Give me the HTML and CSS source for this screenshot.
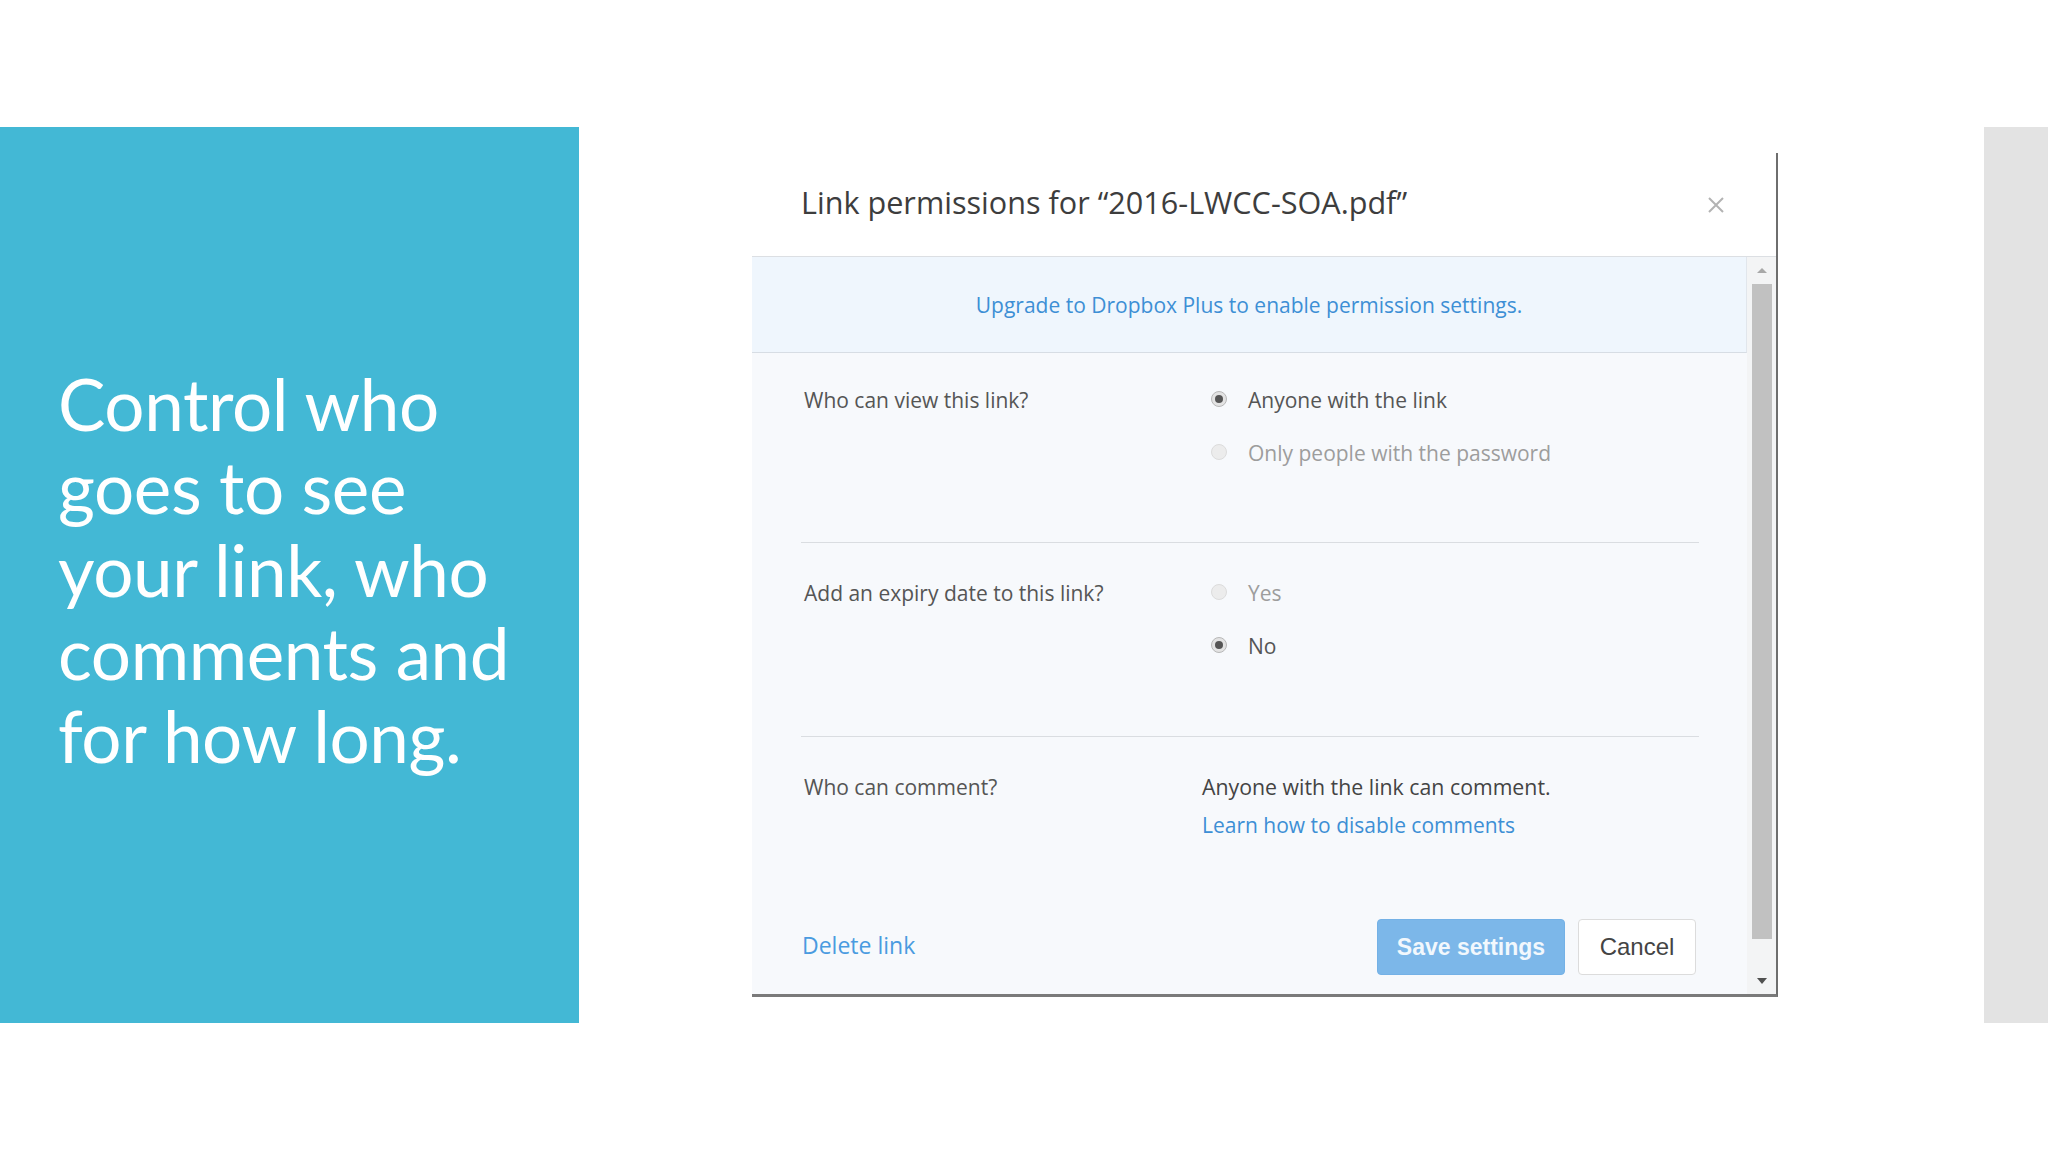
FILE: index.html
```html
<!DOCTYPE html>
<html lang="en">
<head>
<meta charset="utf-8">
<title>Link permissions</title>
<link rel="stylesheet" href="styles.css">
</head>
<body>
<div class="slide">
  <section class="panel">
    <h1 class="panel-title">Control who goes to see your link, who comments and for how long.</h1>
  </section>

  <div class="dialog">
    <header class="dialog-header">
      <h2 class="dialog-title">Link permissions for “2016-LWCC-SOA.pdf”</h2>
      <svg class="close" width="18" height="18" viewBox="0 0 18 18" aria-hidden="true">
        <path d="M2 2 L16 16 M16 2 L2 16" stroke="#b3b3b3" stroke-width="2" fill="none"/>
      </svg>
    </header>
    <div class="dialog-body">
      <div class="content">
        <div class="banner">
          <span class="link">Upgrade to Dropbox Plus to enable permission settings.</span>
        </div>

        <div class="row row-first">
          <div class="label">Who can view this link?</div>
          <div class="options">
            <div class="option"><span class="radio checked"></span><span class="opt-text">Anyone with the link</span></div>
            <div class="option"><span class="radio"></span><span class="opt-text disabled">Only people with the password</span></div>
          </div>
        </div>

        <div class="row">
          <div class="label">Add an expiry date to this link?</div>
          <div class="options">
            <div class="option"><span class="radio"></span><span class="opt-text disabled">Yes</span></div>
            <div class="option"><span class="radio checked"></span><span class="opt-text">No</span></div>
          </div>
        </div>

        <div class="row row-last">
          <div class="label">Who can comment?</div>
          <div class="comment-info">
            <div class="comment-text">Anyone with the link can comment.</div>
            <div class="link">Learn how to disable comments</div>
          </div>
        </div>

        <footer class="dialog-footer">
          <span class="link delete">Delete link</span>
          <div class="buttons">
            <button class="btn btn-primary">Save settings</button>
            <button class="btn btn-default">Cancel</button>
          </div>
        </footer>
      </div>
      <div class="scrollbar">
        <div class="arrow arrow-up"></div>
        <div class="thumb"></div>
        <div class="track"></div>
        <div class="arrow arrow-down"></div>
      </div>
    </div>
  </div>

  <div class="side"></div>
</div>
</body>
</html>
```

FILE: styles.css
```css
* { box-sizing: border-box; }

html, body {
  margin: 0;
  padding: 0;
  background: #ffffff;
}

body {
  width: 2048px;
  height: 1152px;
  overflow: hidden;
  font-family: "Open Sans", "DejaVu Sans", sans-serif;
}

.slide {
  display: flex;
  align-items: flex-start;
  padding-top: 127px;
}

/* left blue panel */
.panel {
  width: 579px;
  height: 896px;
  background: #43b8d5;
  padding: 235px 55px 0 58px;
  flex-shrink: 0;
}

.panel-title {
  margin: 0;
  font-family: "Lato", "Open Sans", sans-serif;
  font-weight: 400;
  font-size: 71px;
  letter-spacing: -0.4px;
  line-height: 83px;
  color: #ffffff;
}

/* dialog */
.dialog {
  width: 1026px;
  height: 844px;
  margin-left: 173px;
  margin-top: 26px;
  background: #ffffff;
  border-right: 2px solid #6e6e6e;
  border-bottom: 3px solid #7a7a7a;
  display: flex;
  flex-direction: column;
  flex-shrink: 0;
}

.dialog-header {
  height: 104px;
  border-bottom: 1px solid #dcdfe3;
  display: flex;
  align-items: center;
  justify-content: space-between;
  padding: 0 51px 6px 49px;
  flex-shrink: 0;
}

.dialog-title {
  margin: 0;
  font-weight: 400;
  font-size: 30.6px;
  color: #3d3d3d;
}

.close { display: block; margin-top: 6px; }

.dialog-body {
  flex: 1;
  display: flex;
  min-height: 0;
}

.content {
  width: 995px;
  background: #f7f9fc;
  display: flex;
  flex-direction: column;
}

.banner {
  height: 96px;
  background: #eff6fd;
  border-bottom: 1px solid #d7dde4;
  border-right: 1px solid #e1e6ec;
  display: flex;
  align-items: center;
  justify-content: center;
  font-size: 21px;
}

.link {
  color: #3d8fd5;
}

.row {
  margin: 0 48px 0 49px;
  display: flex;
  padding: 36px 0 76px;
  border-bottom: 1px solid #dadde1;
}

.row-first { padding-top: 33px; padding-bottom: 75px; }

.row-last {
  border-bottom: none;
  padding-top: 31px;
  padding-bottom: 0;
}

.label {
  width: 410px;
  flex-shrink: 0;
  font-size: 21px;
  line-height: 28px;
  color: #555555;
  padding-left: 3px;
}

.row-last .label { line-height: 38px; }

.options {
  display: flex;
  flex-direction: column;
  gap: 25px;
}

.option {
  display: flex;
  align-items: center;
  height: 28px;
}

.radio {
  width: 16px;
  height: 16px;
  border-radius: 50%;
  background: #ececec;
  border: 1px solid #dcdcdc;
  margin-right: 21px;
  margin-top: -3px;
  position: relative;
  flex-shrink: 0;
}

.radio.checked {
  background: #e3e3e3;
  border-color: #b8b8b8;
}

.radio.checked::after {
  content: "";
  position: absolute;
  left: 3px;
  top: 3px;
  width: 8px;
  height: 8px;
  border-radius: 50%;
  background: #555555;
}

.opt-text {
  font-size: 21px;
  color: #555555;
  line-height: 28px;
}

.opt-text.disabled { color: #9d9d9d; }

.comment-info {
  margin-left: -9px;
  font-size: 21px;
  line-height: 38px;
}

.comment-text { color: #444444; font-size: 21.3px; }

.dialog-footer {
  margin: 75px 51px 0 50px;
  height: 56px;
  display: flex;
  align-items: center;
  justify-content: space-between;
}

.delete {
  font-size: 23px;
  color: #4a9be0;
  margin-top: -4px;
}

.buttons {
  display: flex;
  gap: 13px;
}

.btn {
  height: 56px;
  border-radius: 4px;
  font-family: "Liberation Sans", Arial, sans-serif;
  font-size: 23px;
  padding: 0;
  cursor: default;
}

.btn-primary {
  width: 188px;
  background: #7cb7e9;
  border: 1px solid #74b1e6;
  color: #f2f8fd;
  font-weight: 700;
}

.btn-default {
  width: 118px;
  background: #ffffff;
  border: 1px solid #dcdcdc;
  color: #444444;
  font-size: 24px;
}

/* scrollbar */
.scrollbar {
  width: 29px;
  background: #f3f4f5;
  display: flex;
  flex-direction: column;
  align-items: center;
}

.arrow {
  height: 27px;
  width: 100%;
  display: flex;
  align-items: center;
  justify-content: center;
  flex-shrink: 0;
}

.arrow-up::before {
  content: "";
  border-left: 5px solid transparent;
  border-right: 5px solid transparent;
  border-bottom: 5px solid #a8a8a8;
}

.arrow-down::before {
  content: "";
  border-left: 5px solid transparent;
  border-right: 5px solid transparent;
  border-top: 6px solid #505050;
}

.thumb {
  width: 20px;
  height: 655px;
  background: #c1c1c1;
  flex-shrink: 0;
}

.track { flex: 1; }

/* right gray strip */
.side {
  width: 64px;
  height: 896px;
  margin-left: auto;
  background: #e3e3e3;
  flex-shrink: 0;
}
```
